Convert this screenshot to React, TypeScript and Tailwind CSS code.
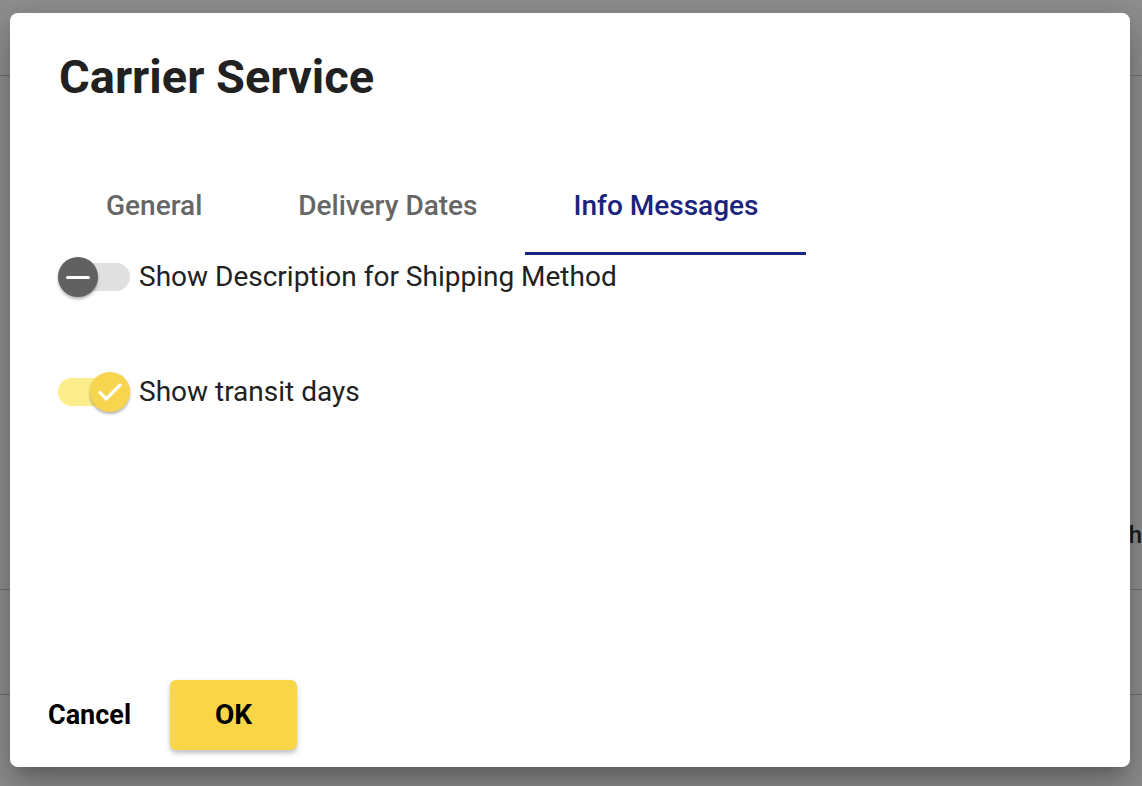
import { useState } from "react";

const tabs = ["General", "Delivery Dates", "Info Messages"];

function Toggle({ checked, onChange }: { checked: boolean; onChange: () => void }) {
  return (
    <button
      type="button"
      onClick={onChange}
      className={`relative h-[28px] w-[72px] shrink-0 rounded-full ${
        checked ? "bg-[#fcee8c]" : "bg-[#e0e0e0]"
      }`}
    >
      <span
        className={`absolute top-[-6px] flex h-[40px] w-[40px] items-center justify-center rounded-full shadow-[0_2px_3px_rgba(0,0,0,0.3)] ${
          checked ? "left-[32px] bg-[#f7d54e]" : "left-0 bg-[#616161]"
        }`}
      >
        {checked ? (
          <svg width="30" height="30" viewBox="0 0 24 24" fill="none">
            <path d="M4 12.5l5 5L20 6.5" stroke="white" strokeWidth="2.8" strokeLinecap="round" strokeLinejoin="round" />
          </svg>
        ) : (
          <span className="h-[3px] w-[24px] rounded-full bg-white" />
        )}
      </span>
    </button>
  );
}

export default function App() {
  const [active, setActive] = useState(2);
  const [showDesc, setShowDesc] = useState(false);
  const [showTransit, setShowTransit] = useState(true);

  return (
    <div className="relative h-[786px] w-[1142px] overflow-hidden bg-white font-['Roboto',sans-serif]">
      {/* page behind the dialog */}
      <div className="flex flex-col">
        <div className="h-[76px] border-b border-[#c8c8c8]" />
        <div className="flex h-[514px] items-end justify-end border-b border-[#c8c8c8] pb-[42px]">
          <span className="text-[24px] font-medium leading-none text-[#333]">Switch</span>
        </div>
        <div className="h-[105px] border-b border-[#c8c8c8]" />
      </div>

      {/* backdrop + dialog */}
      <div className="absolute inset-0 bg-[rgba(0,0,0,0.44)] pl-[10px] pt-[13px]">
        <div className="flex h-[754px] w-[1120px] flex-col rounded-[8px] bg-white shadow-[0_11px_15px_-7px_rgba(0,0,0,0.2),0_24px_38px_3px_rgba(0,0,0,0.14),0_9px_46px_8px_rgba(0,0,0,0.12)]">
          <h1 className="pl-[49px] pt-[38px] text-[47px] font-bold leading-[52px] text-[#212121]">Carrier Service</h1>

          <div className="mt-[56px] flex pl-[48px]">
            {tabs.map((t, i) => (
              <button
                key={t}
                type="button"
                onClick={() => setActive(i)}
                className={`flex h-[96px] items-center border-b-[3px] px-[48px] text-[28px] font-medium ${
                  active === i ? "border-[#1a237e] text-[#1a237e]" : "border-transparent text-[#666]"
                }`}
              >
                {t}
              </button>
            ))}
          </div>

          <div className="flex flex-col gap-[71px] pl-[48px]">
            <label className="flex h-[44px] items-center gap-[9px]">
              <Toggle checked={showDesc} onChange={() => setShowDesc((v) => !v)} />
              <span className="text-[28px] text-[#212121]">Show Description for Shipping Method</span>
            </label>
            <label className="flex h-[44px] items-center gap-[9px]">
              <Toggle checked={showTransit} onChange={() => setShowTransit((v) => !v)} />
              <span className="text-[28px] text-[#212121]">Show transit days</span>
            </label>
          </div>

          <div className="mt-auto flex items-center gap-[39px] pb-[17px] pl-[38px]">
            <button type="button" className="text-[27px] font-bold text-black">
              Cancel
            </button>
            <button
              type="button"
              className="h-[70px] w-[127px] rounded-[6px] bg-[#f8d648] text-[28px] font-bold text-black shadow-[0_3px_5px_rgba(0,0,0,0.25)]"
            >
              OK
            </button>
          </div>
        </div>
      </div>
    </div>
  );
}
